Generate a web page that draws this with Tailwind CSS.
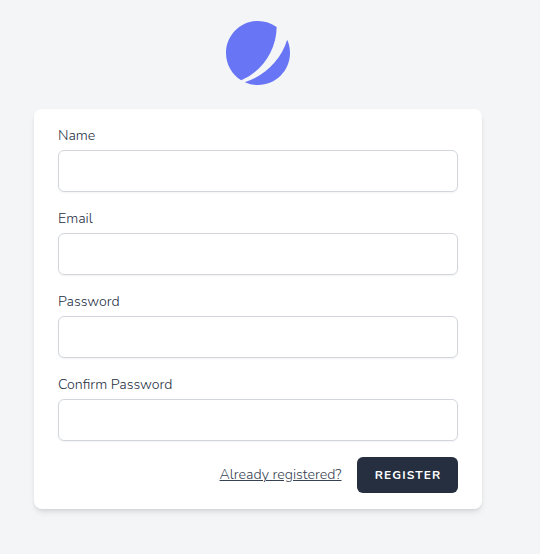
<!DOCTYPE html>
<html lang="en">
<head>
<meta charset="utf-8">
<title>Register</title>
<script src="https://cdn.jsdelivr.net/npm/@tailwindcss/browser@4"></script>
</head>
<body class="min-h-screen bg-[#f4f5f7] pt-[21px] pl-[34px] font-[Nunito,Lato,sans-serif] text-[#252f3f]">
<div class="flex w-[448px] flex-col items-center">
  <svg class="size-16" viewBox="0 0 48 48" fill="#6875F5">
    <path d="M11.395 44.428C4.557 40.198 0 32.632 0 24 0 10.745 10.745 0 24 0a23.891 23.891 0 0113.997 4.502c-.2 17.907-11.097 33.245-26.602 39.926z"/>
    <path d="M14.134 45.885A23.914 23.914 0 0024 48c13.255 0 24-10.745 24-24 0-3.516-.756-6.856-2.115-9.866-4.659 15.143-16.608 27.092-31.75 31.751z"/>
  </svg>
  <form class="mt-6 flex w-full flex-col gap-4 rounded-lg bg-white px-6 py-4 font-light shadow-md">
    <div><label for="name" class="block text-[14.2px] leading-[21px]">Name</label>
      <input id="name" class="mt-1 block h-[42px] w-full rounded-md border border-[#d2d6dc] px-3 shadow-xs"></div>
    <div><label for="email" class="block text-[14.2px] leading-[21px]">Email</label>
      <input id="email" type="email" class="mt-1 block h-[42px] w-full rounded-md border border-[#d2d6dc] px-3 shadow-xs"></div>
    <div><label for="password" class="block text-[14.2px] leading-[21px]">Password</label>
      <input id="password" type="password" class="mt-1 block h-[42px] w-full rounded-md border border-[#d2d6dc] px-3 shadow-xs"></div>
    <div><label for="confirm" class="block text-[14.2px] leading-[21px]">Confirm Password</label>
      <input id="confirm" type="password" class="mt-1 block h-[42px] w-full rounded-md border border-[#d2d6dc] px-3 shadow-xs"></div>
    <div class="flex items-center justify-end">
      <a href="#" class="mr-[15.5px] text-[14.2px] leading-5 whitespace-nowrap text-[#374151] underline">Already registered?</a>
      <button type="button" class="flex h-9 w-[101px] items-center justify-center rounded-md bg-[#252f3f] pl-px text-xs font-bold tracking-[1.1px] text-white">REGISTER</button>
    </div>
  </form>
</div>
</body>
</html>
